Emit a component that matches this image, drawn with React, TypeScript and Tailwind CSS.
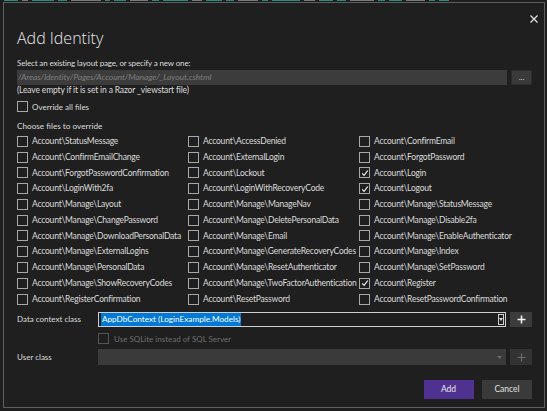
import React from "react";

const FONT = { fontFamily: "Lato, 'Open Sans', 'Liberation Sans', sans-serif" };

const rows: [string, boolean][][] = [
  [["Account\\StatusMessage", false], ["Account\\AccessDenied", false], ["Account\\ConfirmEmail", false]],
  [["Account\\ConfirmEmailChange", false], ["Account\\ExternalLogin", false], ["Account\\ForgotPassword", false]],
  [["Account\\ForgotPasswordConfirmation", false], ["Account\\Lockout", false], ["Account\\Login", true]],
  [["Account\\LoginWith2fa", false], ["Account\\LoginWithRecoveryCode", false], ["Account\\Logout", true]],
  [["Account\\Manage\\Layout", false], ["Account\\Manage\\ManageNav", false], ["Account\\Manage\\StatusMessage", false]],
  [["Account\\Manage\\ChangePassword", false], ["Account\\Manage\\DeletePersonalData", false], ["Account\\Manage\\Disable2fa", false]],
  [["Account\\Manage\\DownloadPersonalData", false], ["Account\\Manage\\Email", false], ["Account\\Manage\\EnableAuthenticator", false]],
  [["Account\\Manage\\ExternalLogins", false], ["Account\\Manage\\GenerateRecoveryCodes", false], ["Account\\Manage\\Index", false]],
  [["Account\\Manage\\PersonalData", false], ["Account\\Manage\\ResetAuthenticator", false], ["Account\\Manage\\SetPassword", false]],
  [["Account\\Manage\\ShowRecoveryCodes", false], ["Account\\Manage\\TwoFactorAuthentication", false], ["Account\\Register", true]],
  [["Account\\RegisterConfirmation", false], ["Account\\ResetPassword", false], ["Account\\ResetPasswordConfirmation", false]],
];

function Box({ checked, dim }: { checked?: boolean; dim?: boolean }) {
  return (
    <span
      className={`flex items-center justify-center w-[11px] h-[11px] shrink-0 border ${
        dim ? "border-[#555555]" : "border-[#a8a8a8]"
      } bg-[#1f1f1f]`}
    >
      {checked && (
        <svg width="8" height="8" viewBox="0 0 8 8">
          <path d="M1.2 4.3 L3.1 6.3 L6.8 1.5" fill="none" stroke="#f0f0f0" strokeWidth="1.2" />
        </svg>
      )}
    </span>
  );
}

const strip = [
  14, 6, 22, 9, 30, 5, 12, 18, 7, 25, 10, 16, 8, 20, 6, 28, 11, 14, 9, 24, 7, 13, 19, 6, 10,
];

export default function App() {
  return (
    <div className="w-[547px] h-[411px] bg-[#1e1e1e] overflow-hidden relative" style={FONT}>
      <div className="h-[2px] overflow-hidden flex gap-[4px] pl-[4px]">
        {strip.map((w, i) => (
          <span key={i} className={`h-[1px] ${i % 3 === 1 ? "bg-[#7a7a7a]" : "bg-[#2a8a80]"}`} style={{ width: w }} />
        ))}
      </div>
      <div className="ml-[3px] w-[542px] h-[406px] border border-[#5e5e5e] bg-[#1f1f1f] relative pl-[13px] pr-[12px] text-[#dcdcdc]">
        <button className="absolute top-[11px] right-[5px] w-[10px] h-[10px] flex items-center justify-center">
          <svg width="8" height="8" viewBox="0 0 8 8">
            <path d="M0.5 0.5 L7.5 7.5 M7.5 0.5 L0.5 7.5" stroke="#e6e6e6" strokeWidth="1.2" />
          </svg>
        </button>

        <div
          className="mt-[23px] h-[24px] leading-[24px] text-[16px] text-[#e8e8e8]"
          style={{ fontFamily: "'Open Sans', Lato, sans-serif", fontWeight: 300 }}
        >
          Add Identity
        </div>

        <div className="mt-[7px] h-[12px] leading-[12px] text-[8px] tracking-[-0.15px]">
          Select an existing layout page, or specify a new one:
        </div>

        <div className="mt-[1px] flex gap-[4px] h-[15px]">
          <div className="flex-1 bg-[#3c3c3c] flex items-center pl-[1px] text-[8.5px] tracking-[-0.1px] italic text-[#7c7c7c]">
            /Areas/Identity/Pages/Account/Manage/_Layout.cshtml
          </div>
          <div className="w-[21px] bg-[#3a3a3a] border border-[#2c2c2c] flex items-center justify-center text-[8px] leading-none text-[#cfcfcf] pb-[1px]">
            ...
          </div>
        </div>

        <div className="h-[11px] leading-[11px] text-[8.5px] tracking-[-0.15px]">
          (Leave empty if it is set in a Razor _viewstart file)
        </div>

        <div className="mt-[5px] h-[11px] flex items-center gap-[4px] text-[8px]">
          <Box />
          <span>Override all files</span>
        </div>

        <div className="mt-[8.5px] h-[11px] leading-[11px] text-[8.2px]">Choose files to override</div>

        <div className="mt-[2px] grid grid-cols-[171px_171px_1fr]">
          {rows.flat().map(([label, checked], i) => (
            <div
              key={i}
              className="h-[15.78px] flex items-center gap-[4px] text-[8.5px] tracking-[-0.2px] whitespace-nowrap"
            >
              <Box checked={checked} />
              <span>{label}</span>
            </div>
          ))}
        </div>

        <div className="mt-[5px] flex items-center h-[15px]">
          <div className="w-[81px] text-[8px]">Data context class</div>
          <div className="flex-1 flex gap-[4px] h-[15px]">
            <div className="flex-1 border border-[#d0d0d0] bg-[#1f1f1f] flex items-center pl-[2px] pr-[1px]">
              <span className="bg-[#0078d7] text-white text-[8.2px] h-[13px] leading-[13px] px-[1px]">
                AppDbContext (LoginExample.Models)
              </span>
              <span className="flex-1" />
              <span className="w-[6px] h-[11px] border border-[#d0d0d0] flex items-center justify-center">
                <svg width="4" height="3" viewBox="0 0 4 3">
                  <path d="M0 0 L4 0 L2 3 Z" fill="#e0e0e0" />
                </svg>
              </span>
            </div>
            <div className="w-[22px] bg-[#3c3c3c] flex items-center justify-center">
              <svg width="9" height="9" viewBox="0 0 9 9">
                <path d="M4.5 0.5 V8.5 M0.5 4.5 H8.5" stroke="#f2f2f2" strokeWidth="1.6" />
              </svg>
            </div>
          </div>
        </div>

        <div className="mt-[7px] ml-[81px] h-[10px] flex items-center gap-[5px] text-[8px] text-[#6e6e6e]">
          <Box dim />
          <span>Use SQLite instead of SQL Server</span>
        </div>

        <div className="mt-[5.5px] flex items-center h-[15.5px]">
          <div className="w-[81px] text-[8px]">User class</div>
          <div className="flex-1 flex gap-[4px] h-[15.5px]">
            <div className="flex-1 bg-[#3a3a3a] flex items-center justify-end pr-[4px]">
              <svg width="5" height="3" viewBox="0 0 5 3">
                <path d="M0 0 L5 0 L2.5 3 Z" fill="#6a6a6a" />
              </svg>
            </div>
            <div className="w-[22px] bg-[#333333] flex items-center justify-center">
              <svg width="9" height="9" viewBox="0 0 9 9">
                <path d="M4.5 0.5 V8.5 M0.5 4.5 H8.5" stroke="#6a6a6a" strokeWidth="1.2" />
              </svg>
            </div>
          </div>
        </div>

        <div className="mt-[15.5px] flex justify-end gap-[8.5px] h-[18.5px]">
          <button className="w-[50px] h-full bg-[#4f3290] text-[#e8e8e8] text-[8.5px]">Add</button>
          <button className="w-[50px] h-full bg-[#3a3a3a] text-[#e0e0e0] text-[8.5px]">Cancel</button>
        </div>
      </div>
    </div>
  );
}
